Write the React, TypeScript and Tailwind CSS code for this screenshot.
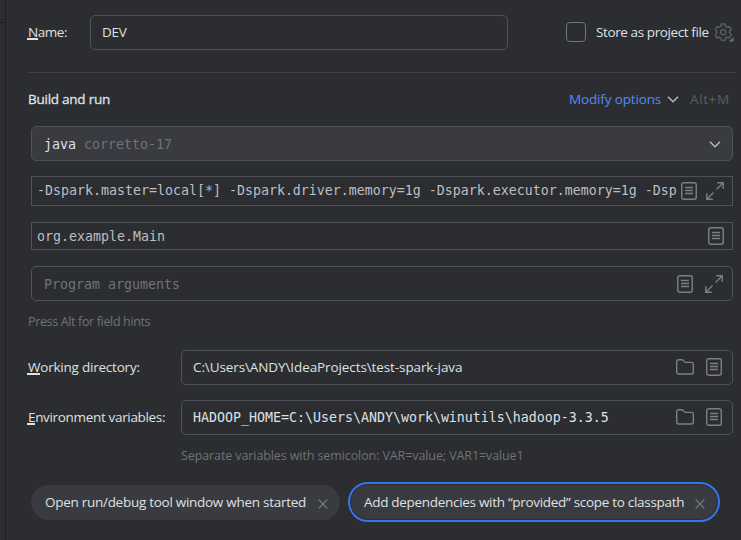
import type { ReactNode } from "react";

const MONO = "font-['DejaVu_Sans_Mono',monospace] text-[13.29px] whitespace-pre";

function ListIcon() {
  return (
    <svg width="16" height="18" viewBox="0 0 16 18" fill="none" stroke="#7c7f85" className="shrink-0">
      <rect x="0.75" y="0.75" width="14.5" height="16.5" rx="2" strokeWidth="1.4" />
      <path d="M4 5.5h8M4 8.5h8M4 11.5h8" strokeWidth="1.3" />
    </svg>
  );
}

function ExpandIcon() {
  return (
    <svg width="18" height="18" viewBox="0 0 18 18" fill="none" stroke="#7c7f85" strokeWidth="1.4" className="shrink-0">
      <path d="M11.2 0.8H17.2V6.8M17 1L10.5 7.5M0.8 11.2V17.2H6.8M1 17L7.5 10.5" />
    </svg>
  );
}

function FolderIcon() {
  return (
    <svg width="18" height="16" viewBox="0 0 18 16" fill="none" stroke="#7c7f85" strokeWidth="1.4" className="shrink-0">
      <path d="M0.7 2.7a2 2 0 0 1 2-2h3.5l3 2.7h6.1a2 2 0 0 1 2 2v7.600a2 2 0 0 1-2 2H2.700a2 2 0 0 1-2-2z" />
    </svg>
  );
}

function ChevronIcon() {
  return (
    <svg width="12" height="7" viewBox="0 0 12 7" fill="none" stroke="#b4b8bf" strokeWidth="1.5" className="shrink-0">
      <path d="M1 0.8L6 5.8L11 0.8" />
    </svg>
  );
}

function GearIcon() {
  return (
    <svg width="19" height="19" viewBox="0 0 19 19" fill="none" stroke="#5a5d63" strokeWidth="1.4" className="shrink-0">
      <path d="M6.5 1h3.4l.7 2.3 1.6.9 2.4-.5 1.6 2.9-1.6 1.7v1.800l1.600 1.700-1.600 2.900-2.400-.5-1.600.9-.7 2.300H6.500l-.7-2.300-1.600-.9-2.400.5-1.600-2.900 1.600-1.700V8.300l-1.600-1.700 1.600-2.900 2.400.5 1.600-.9z" strokeLinejoin="round" />
      <circle cx="8.200" cy="9.200" r="2.600" />
      <path d="M18.500 14v4.500H14z" fill="#6f737a" stroke="none" />
    </svg>
  );
}

function CloseIcon() {
  return (
    <svg width="10" height="10" viewBox="0 0 10 10" stroke="#7c7f85" strokeWidth="1.200" className="mt-[3px] shrink-0">
      <path d="M0.700 0.700L9.300 9.300M9.300 0.700L0.700 9.300" />
    </svg>
  );
}

function Mnemonic({ children }: { children: ReactNode }) {
  return <span className="inline-block h-[18px] border-b-2 border-[#dfe1e5] leading-[20px] -ml-px pl-px">{children}</span>;
}

function Field({ className, children }: { className: string; children: ReactNode }) {
  return <div className={`flex items-center border border-[#4e5157] ${className}`}>{children}</div>;
}

export default function App() {
  return (
    <div className="flex h-[540px] w-[741px] overflow-hidden bg-[#2b2d30] font-['Open_Sans',sans-serif] text-[13.5px] leading-[20px] whitespace-nowrap text-[#dfe1e5]">
      <div className="w-[6px] shrink-0 border-r border-[#1e1f22]">
        <div className="h-[23px] border-b border-[#1e1f22]" />
      </div>
      <main className="w-[727px] shrink-0 pt-[15px] pl-[25px]">
        <div className="-ml-[3px] flex h-[35px] items-center">
          <div className="w-[62px] shrink-0 pb-[2px] tracking-[-0.45px]"><Mnemonic>N</Mnemonic>ame:</div>
          <Field className="h-[35px] w-[418px] shrink-0 rounded-[5px] pl-[11px]"><span className="pb-[2px] tracking-[-0.3px]">DEV</span></Field>
          <div className="mb-px ml-[58px] size-[20px] shrink-0 rounded-[4px] border border-[#6f737a]" />
          <span className="ml-[10px] w-[119px] shrink-0 pb-[2px] tracking-[-0.4px]">Store as project file</span>
          <GearIcon />
        </div>
        <div className="-mr-[3px] mt-[22px] -ml-[4px] h-px bg-[#3d3f43]" />
        <div className="mt-[16px] -ml-[3px] flex h-[20px] items-center">
          <span className="w-[541px] tracking-[-0.25px] [-webkit-text-stroke:0.3px_#dfe1e5]">Build and run</span>
          <span className="w-[98px] tracking-[-0.15px] text-[#548af7]">Modify options</span>
          <ChevronIcon />
          <span className="ml-[11px] tracking-[0.6px] text-[#5a5d63]">Alt+M</span>
        </div>

        <Field className="mt-[17px] h-[35px] justify-between rounded-[5px] bg-[#393b40] pt-[2px] pr-[11px] pl-[12px]">
          <span className={MONO}>java <span className="text-[#6f737a]">corretto-17</span></span>
          <ChevronIcon />
        </Field>
        <Field className="mt-[15px] h-[30px] pr-[7px] pb-px pl-[5px] text-[#bcbec4]">
          <span className={`w-[644px] shrink-0 pt-px ${MONO}`}>-Dspark.master=local[*] -Dspark.driver.memory=1g -Dspark.executor.memory=1g -Dsp</span>
          <ListIcon />
          <span className="w-[9px] shrink-0" />
          <ExpandIcon />
        </Field>
        <Field className="mt-[16px] h-[28px] justify-between pr-[8px] pl-[5px] text-[#bcbec4]">
          <span className={`pt-[2px] ${MONO}`}>org.example.Main</span>
          <ListIcon />
        </Field>
        <Field className="mt-[16px] h-[35px] rounded-[5px] pl-[12px] text-[#6f737a]">
          <span className={`w-[633px] pt-[2px] ${MONO}`}>Program arguments</span>
          <ListIcon />
          <span className="w-[12px] shrink-0" />
          <ExpandIcon />
        </Field>
        <div className="mt-[11px] -ml-[3px] text-[12.5px] tracking-[-0.35px] text-[#6f737a]">Press Alt for field hints</div>

        <div className="mt-[18px] -ml-[3px] flex h-[35px] items-center">
          <div className="w-[153px] shrink-0 pb-[2px] tracking-[-0.22px]"><Mnemonic>W</Mnemonic>orking directory:</div>
          <Field className="h-[35px] w-[552px] rounded-[5px] pb-px pl-[11px]">
            <span className="w-[483px] shrink-0 pb-px tracking-[-0.1px]">C:\Users\ANDY\IdeaProjects\test-spark-java</span>
            <FolderIcon />
            <span className="w-[12px] shrink-0" />
            <ListIcon />
          </Field>
        </div>
        <div className="mt-[15px] -ml-[3px] flex h-[35px] items-center">
          <div className="w-[153px] shrink-0 pb-[2px] tracking-[-0.33px]"><Mnemonic>E</Mnemonic>nvironment variables:</div>
          <Field className="h-[35px] w-[552px] rounded-[5px] pb-px pl-[11px]">
            <span className={`w-[483px] shrink-0 pt-px ${MONO}`}>HADOOP_HOME=C:\Users\ANDY\work\winutils\hadoop-3.3.5</span>
            <FolderIcon />
            <span className="w-[12px] shrink-0" />
            <ListIcon />
          </Field>
        </div>
        <div className="mt-[11px] ml-[150px] text-[12.5px] tracking-[-0.1px] text-[#6f737a]">Separate variables with semicolon: VAR=value; VAR1=value1</div>

        <div className="mt-[16px] flex h-[40px] items-center">
          <div className="mt-px flex h-[35px] w-[309px] items-center justify-between rounded-full bg-[#393b40] pr-[12px] pl-[14px]">
            <span className="pb-[2px] tracking-[-0.28px]">Open run/debug tool window when started</span>
            <CloseIcon />
          </div>
          <div className="ml-[8px] flex h-[40px] w-[372px] items-center justify-between rounded-full border-2 border-[#3574f0] bg-[#393b40] pt-px pr-[13px] pl-[14px] inset-shadow-[0_0_0_1px_#2b2d30]">
            <span className="pb-[2px] tracking-[-0.3px]">Add dependencies with “provided” scope to classpath</span>
            <CloseIcon />
          </div>
        </div>
      </main>
    </div>
  );
}
